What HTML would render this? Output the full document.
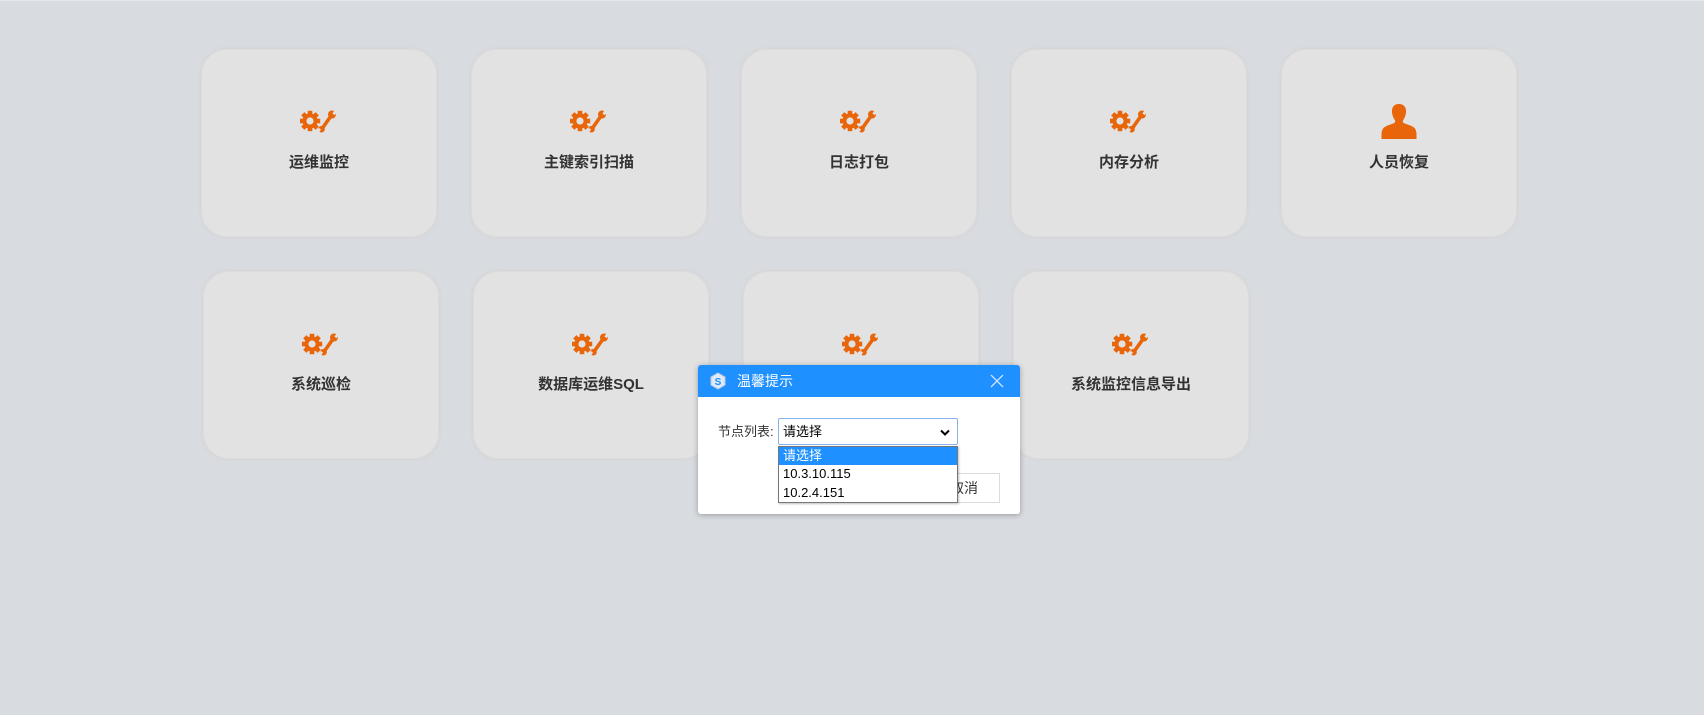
<!DOCTYPE html>
<html><head><meta charset="utf-8"><style>
*{box-sizing:border-box;margin:0;padding:0}
body{width:1704px;height:715px;background:#d8dbe0;position:relative;overflow:hidden;font-family:"Liberation Sans","Noto Sans CJK SC",sans-serif;border-top:1px solid #e6e7ea}
.card{position:absolute;width:236px;height:188px;background:#e2e2e2;border-radius:26px;box-shadow:0 0 3px 1px #d5d5d5;border:1px solid #dcdcdc}
.card svg{position:absolute;left:50%;transform:translateX(-50%)}
.card .t{position:absolute;left:0;right:0;top:103px;text-align:center;font-size:15px;font-weight:bold;color:#333;line-height:20px}
.dlg{position:absolute;left:698px;top:364px;width:322px;height:149px;background:#fff;border-radius:3px;box-shadow:0 1px 6px rgba(0,0,0,.3);overflow:visible}
.hd{height:32px;background:#1e90ff;border-radius:3px 3px 0 0;color:#fff;font-size:14px;line-height:32px;padding-left:39px;position:relative}
.lbl{position:absolute;left:20px;top:56px;font-size:13px;color:#333}
.sel{position:absolute;left:80px;top:53px;width:180px;height:27px;border:1px solid #88b3e8;border-radius:2px;font-size:13px;line-height:25px;padding-left:4px;color:#000;background:#fff}
.btn{position:absolute;left:215px;top:108px;width:87px;height:30px;border:1px solid #dcdcdc;font-size:14px;line-height:28px;padding-left:36px;color:#333;background:#fff}
.dd{position:absolute;left:80px;top:81px;width:180px;height:57px;border:1px solid #777;background:#fff;font-size:13px;box-shadow:1px 1px 2px rgba(0,0,0,.25)}
.dd div{height:18.3px;line-height:18px;padding-left:4px;color:#000}
.dd .a{background:#1e90ff;color:#fff}
</style></head><body>
<svg width="0" height="0" style="position:absolute"><defs>
<g id="gw">
<g fill="#e8650a" transform="translate(10,11)">
<circle r="7.6"/>
<rect x="-2.3" y="-10.2" width="4.6" height="20.4"/>
<rect x="-2.3" y="-10.2" width="4.6" height="20.4" transform="rotate(45)"/>
<rect x="-2.3" y="-10.2" width="4.6" height="20.4" transform="rotate(90)"/>
<rect x="-2.3" y="-10.2" width="4.6" height="20.4" transform="rotate(135)"/>
</g>
<circle cx="10" cy="11" r="3.6" fill="#e2e2e2"/>
<g>
<line x1="22.5" y1="18" x2="31" y2="6" stroke="#e8650a" stroke-width="3.6" stroke-linecap="round"/>
<circle cx="32" cy="4.5" r="4" fill="#e8650a"/>
<rect x="32.2" y="-1" width="3" height="5" fill="#e2e2e2" transform="rotate(35 33 4)"/>
<circle cx="21.5" cy="19.2" r="3.3" fill="#e8650a"/>
<rect x="18" y="19" width="2.6" height="4" fill="#e2e2e2" transform="rotate(35 20 20)"/>
</g>
</g>
<g id="pp"><path fill="#e8650a" d="M17.5 0c5 0 7.5 3.5 7 8.5-.3 3-1.3 5.5-2.8 7.5-.6.8-.6 2.2.6 3 2.5 1.3 6.5 2.2 9.5 4 2 1.2 3 4 3.2 6.5V35H0v-5.5c.2-2.5 1.2-5.3 3.2-6.5 3-1.8 7-2.7 9.5-4 1.2-.8 1.2-2.2.6-3-1.5-2-2.5-4.5-2.8-7.5C10 3.5 12.5 0 17.5 0z"/></g>
</defs></svg>

<div class="card" style="left:201px;top:48px"><svg width="38" height="23" style="top:60px" viewBox="0 0 38 23"><use href="#gw"/></svg><div class="t">运维监控</div></div>
<div class="card" style="left:471px;top:48px"><svg width="38" height="23" style="top:60px" viewBox="0 0 38 23"><use href="#gw"/></svg><div class="t">主键索引扫描</div></div>
<div class="card" style="left:741px;top:48px"><svg width="38" height="23" style="top:60px" viewBox="0 0 38 23"><use href="#gw"/></svg><div class="t">日志打包</div></div>
<div class="card" style="left:1011px;top:48px"><svg width="38" height="23" style="top:60px" viewBox="0 0 38 23"><use href="#gw"/></svg><div class="t">内存分析</div></div>
<div class="card" style="left:1281px;top:48px"><svg width="35" height="35" style="top:54px" viewBox="0 0 35 35"><use href="#pp"/></svg><div class="t">人员恢复</div></div>

<div class="card" style="left:203px;top:270px"><svg width="38" height="23" style="top:61px" viewBox="0 0 38 23"><use href="#gw"/></svg><div class="t">系统巡检</div></div>
<div class="card" style="left:473px;top:270px"><svg width="38" height="23" style="top:61px" viewBox="0 0 38 23"><use href="#gw"/></svg><div class="t">数据库运维SQL</div></div>
<div class="card" style="left:743px;top:270px"><svg width="38" height="23" style="top:61px" viewBox="0 0 38 23"><use href="#gw"/></svg><div class="t"></div></div>
<div class="card" style="left:1013px;top:270px"><svg width="38" height="23" style="top:61px" viewBox="0 0 38 23"><use href="#gw"/></svg><div class="t">系统监控信息导出</div></div>

<div class="dlg">
<div class="hd"><svg width="18" height="18" viewBox="0 0 18 18" style="position:absolute;left:11px;top:7px"><path d="M9 1l7 4v8l-7 4-7-4V5z" fill="#dfeaf6" stroke="#b8cbe0"/><text x="9" y="13" font-size="10" font-weight="bold" text-anchor="middle" fill="#1e90ff" font-family="Liberation Sans">S</text></svg>温馨提示
<svg width="14" height="14" viewBox="0 0 14 14" style="position:absolute;right:16px;top:9px"><path d="M1 1L13 13M13 1L1 13" stroke="#cfe4ff" stroke-width="1.3"/></svg></div>
<div class="lbl">节点列表:</div>
<div class="sel">请选择<svg width="10" height="8" viewBox="0 0 10 8" style="position:absolute;right:7px;top:10px"><path d="M1 1.5l4 4 4-4" stroke="#000" stroke-width="2" fill="none"/></svg></div>
<div class="btn">取消</div>
<div class="dd"><div class="a">请选择</div><div>10.3.10.115</div><div>10.2.4.151</div></div>
</div>
</body></html>
